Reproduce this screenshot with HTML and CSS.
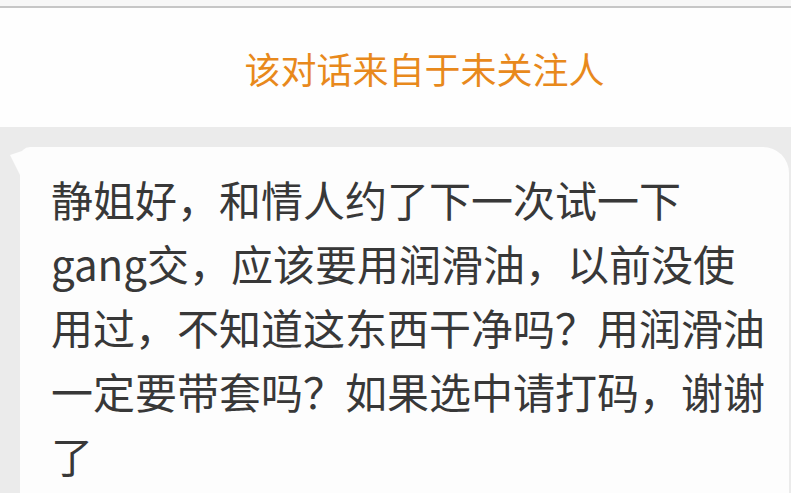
FILE: index.html
```html
<!DOCTYPE html>
<html lang="zh-CN">
<head>
    <meta charset="UTF-8">
    <meta name="viewport" content="width=device-width, initial-scale=1.0">
    <title>私信</title>
    <link rel="stylesheet" href="styles.css">
</head>
<body>
    <div class="topbar"></div>

    <div class="notice">
        <span class="notice-text">该对话来自于未关注人</span>
    </div>

    <div class="thread">
        <div class="bubble">
            <p class="message">静姐好，和情人约了下一次试一下gang交，应该要用润滑油，以前没使用过，不知道这东西干净吗？用润滑油一定要带套吗？如果选中请打码，谢谢了</p>
        </div>
    </div>
</body>
</html>
```

FILE: styles.css
```css
* {
    margin: 0;
    padding: 0;
    box-sizing: border-box;
}

html, body {
    height: 100%;
    overflow: hidden;
}

body {
    background-color: #ebebeb;
    font-family: 'Noto Sans CJK SC', 'Noto Sans', sans-serif;
}

.topbar {
    height: 8px;
    background-color: #f7f7f7;
    border-bottom: 2px solid #c6c6c6;
}

.notice {
    height: 119px;
    background-color: #fefefe;
    display: flex;
    align-items: center;
    justify-content: center;
    padding-left: 58px;
}

.notice-text {
    color: #e8891c;
    font-size: 36px;
    line-height: 1;
}

.thread {
    padding: 20px 2px 0 20px;
}

/* white bubble with a little flag at the top-left */
.bubble {
    position: relative;
    background-color: #fdfdfd;
    border-radius: 10px 26px 0 0;
    padding: 20px 20px 30px 31px;
    min-height: 360px;
}

.bubble::before {
    content: '';
    position: absolute;
    left: -10px;
    top: 0;
    width: 30px;
    height: 32px;
    background-color: #fdfdfd;
    clip-path: polygon(0 8px, 24px 0, 30px 0, 30px 32px, 10px 28px);
}

.message {
    color: #383838;
    font-size: 42px;
    line-height: 64px;
}
```
